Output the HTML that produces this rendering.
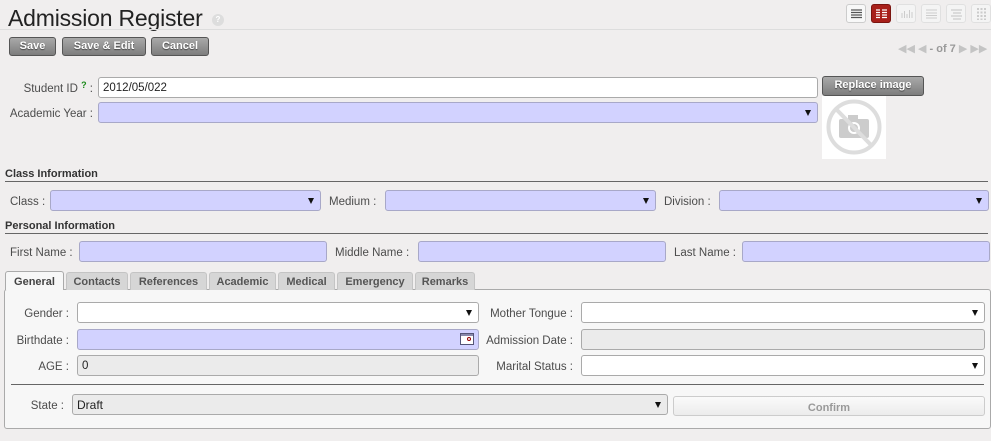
<!DOCTYPE html>
<html><head><meta charset="utf-8">
<style>
*{box-sizing:border-box;margin:0;padding:0}
body{width:991px;height:441px;background:#f0eeee;font-family:"Liberation Sans","DejaVu Sans",sans-serif;font-size:11.5px;color:#4c4c4c;position:relative;overflow:hidden}
.a{position:absolute}
.lbl{position:absolute;text-align:right;white-space:nowrap;line-height:21px;padding-top:2px;color:#4c4c4c}
.in{position:absolute;height:21px;border:1px solid #aaa;border-radius:3px;background:#fff;padding-left:4px;line-height:20px;color:#222;font-size:11.5px}
.req{background:#d2d2ff;border-color:#a8a8c8}
.ro{background:#ebebeb}
.sel::after{content:"";position:absolute;right:6px;top:7px;border-left:3.5px solid transparent;border-right:3.5px solid transparent;border-top:6px solid #111}
.btn{position:absolute;height:19px;border:1px solid #555;border-radius:3px;background:linear-gradient(#a9a9a9,#7d7d7d);color:#fff;font-weight:bold;font-size:11px;text-align:center;line-height:17px;text-shadow:0 1px 1px #444}
.sec{position:absolute;left:5px;width:983px;font-weight:bold;color:#333;font-size:11px;border-bottom:1px solid #666;line-height:13px}
.tab{position:absolute;top:272px;height:18px;background:#d6d6d6;border:1px solid #c4c4c4;border-bottom:none;border-radius:3px 3px 0 0;font-weight:bold;font-size:11px;color:#555;text-align:center;line-height:18px}
.vi{position:absolute;top:4px;width:20px;height:19px;border:1px solid #e0e0e0;border-radius:3px;background:#f4f4f4}
</style></head><body>
<div class="a" style="left:8px;top:4px;font-size:23px;color:#222;line-height:28px;letter-spacing:-0.2px">Admission Register</div>
<div class="a" style="left:212px;top:14px;width:12px;height:12px;border-radius:6px;background:#ddd;color:#fff;font-size:8px;text-align:center;line-height:12px;font-weight:bold">?</div>
<div class="a" style="left:0;top:29px;width:991px;height:1px;background:#ddd"></div>

<div class="vi" style="left:846px;border-color:#ccc;background:#f8f8f8"><svg width="18" height="17"><g stroke="#555" stroke-width="1.3"><path d="M4 5h11M4 7.5h11M4 10h11M4 12.5h11"/></g></svg></div>
<div class="vi" style="left:871px;background:#a8201a;border-color:#7a1510"><svg width="18" height="17"><g stroke="#fff" stroke-width="1.3"><path d="M4 5h4M10 5h5M4 7.5h4M10 7.5h5M4 10h4M10 10h5M4 12.5h4M10 12.5h5"/></g></svg></div>
<div class="vi" style="left:896px"><svg width="18" height="17"><g stroke="#ccc"><path d="M5 13V8M7.5 13V6M10 13V9M12.5 13V5M15 13V7"/></g></svg></div>
<div class="vi" style="left:921px"><svg width="18" height="17"><g stroke="#ccc"><path d="M4 5h11M4 8h11M4 10.5h11M4 13h11"/></g></svg></div>
<div class="vi" style="left:946px"><svg width="18" height="17"><g stroke="#ccc" stroke-width="1.2"><path d="M4 5h11M6 8h8M4 11h11M6 14h8"/></g></svg></div>
<div class="vi" style="left:971px"><svg width="18" height="17"><g stroke="#ccc" stroke-width="2" stroke-dasharray="2 1.5"><path d="M6 3v12M9.5 3v12M13 3v12"/></g></svg></div>

<div class="btn" style="left:9px;top:37px;width:47px">Save</div>
<div class="btn" style="left:62px;top:37px;width:84px">Save &amp; Edit</div>
<div class="btn" style="left:151px;top:37px;width:58px">Cancel</div>

<div class="a" style="left:898px;top:42px;font-size:11px;color:#c4c4c4;font-weight:bold">◀◀ ◀ <span style="color:#999">- of 7</span> ▶ ▶▶</div>

<div class="lbl" style="left:10px;top:77px;width:83px">Student ID <span style="color:#1a8a1a;font-weight:bold;font-size:9px;position:relative;top:-4px">?</span> :</div>
<div class="in" style="left:98px;top:77px;width:720px">2012/05/022</div>
<div class="lbl" style="left:4px;top:102px;width:89px">Academic Year :</div>
<div class="in req sel" style="left:98px;top:102px;width:720px"></div>
<div class="btn" style="left:822px;top:76px;width:102px;height:20px">Replace image</div>
<div class="a" style="left:822px;top:96px;width:64px;height:63px;background:#fff"><svg width="64" height="63"><circle cx="32" cy="31" r="25.5" fill="none" stroke="#ddd" stroke-width="4"/><rect x="17" y="23" width="30" height="19" rx="2" fill="#ccc"/><rect x="26" y="19" width="10" height="5" fill="#ccc"/><circle cx="32" cy="32" r="6" fill="#fff"/><circle cx="32" cy="32" r="4" fill="#ccc"/><path d="M14 13L50 50" stroke="#ddd" stroke-width="4"/></svg></div>

<div class="sec" style="top:168px">Class Information</div>
<div class="lbl" style="left:10px;top:190px">Class :</div>
<div class="in req sel" style="left:50px;top:190px;width:271px"></div>
<div class="lbl" style="left:329px;top:190px">Medium :</div>
<div class="in req sel" style="left:385px;top:190px;width:271px"></div>
<div class="lbl" style="left:664px;top:190px">Division :</div>
<div class="in req sel" style="left:719px;top:190px;width:270px"></div>

<div class="sec" style="top:220px">Personal Information</div>
<div class="lbl" style="left:10px;top:241px">First Name :</div>
<div class="in req" style="left:79px;top:241px;width:248px"></div>
<div class="lbl" style="left:335px;top:241px">Middle Name :</div>
<div class="in req" style="left:418px;top:241px;width:248px"></div>
<div class="lbl" style="left:674px;top:241px">Last Name :</div>
<div class="in req" style="left:742px;top:241px;width:248px"></div>

<div class="a" style="left:4px;top:289px;width:987px;height:140px;background:#f7f7f7;border:1px solid #aaa;border-radius:3px"></div>
<div class="tab" style="left:5px;top:271px;width:59px;height:19px;background:#f7f7f7;border-color:#aaa;color:#444;line-height:21px">General</div>
<div class="tab" style="left:66px;width:62px">Contacts</div>
<div class="tab" style="left:130px;width:77px">References</div>
<div class="tab" style="left:209px;width:67px">Academic</div>
<div class="tab" style="left:278px;width:57px">Medical</div>
<div class="tab" style="left:337px;width:76px">Emergency</div>
<div class="tab" style="left:415px;width:60px">Remarks</div>

<div class="lbl" style="left:10px;top:302px;width:59px">Gender :</div>
<div class="in sel" style="left:77px;top:302px;width:402px"></div>
<div class="lbl" style="left:480px;top:302px;width:93px">Mother Tongue :</div>
<div class="in sel" style="left:581px;top:302px;width:404px"></div>

<div class="lbl" style="left:10px;top:329px;width:59px">Birthdate :</div>
<div class="in req" style="left:77px;top:329px;width:402px"><div class="a" style="right:4px;top:3px;width:14px;height:12px;border:1px solid #557;background:#fff"><div class="a" style="left:0;top:0;width:12px;height:2px;background:#88a"></div><div class="a" style="right:2px;top:3px;width:4px;height:4px;border:1px solid #900;border-radius:2px"></div></div></div>
<div class="lbl" style="left:480px;top:329px;width:93px">Admission Date :</div>
<div class="in ro" style="left:581px;top:329px;width:404px"></div>

<div class="lbl" style="left:10px;top:355px;width:59px">AGE :</div>
<div class="in ro" style="left:77px;top:355px;width:402px">0</div>
<div class="lbl" style="left:480px;top:355px;width:93px">Marital Status :</div>
<div class="in sel" style="left:581px;top:355px;width:404px"></div>

<div class="a" style="left:11px;top:384px;width:973px;height:1px;background:#666"></div>
<div class="lbl" style="left:10px;top:394px;width:54px">State :</div>
<div class="in ro sel" style="left:72px;top:394px;width:596px;font-size:12px">Draft</div>
<div class="a" style="left:673px;top:396px;width:312px;height:20px;border:1px solid #ccc;border-radius:3px;background:linear-gradient(#fafafa,#ececec);color:#999;font-weight:bold;font-size:11px;text-align:center;line-height:22px">Confirm</div>
</body></html>
